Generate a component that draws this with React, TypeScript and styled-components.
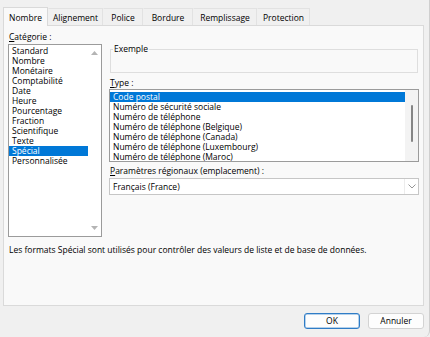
import React from 'react';
import styled, { createGlobalStyle } from 'styled-components';

const Global = createGlobalStyle`
  html, body { margin: 0; padding: 0; background: #f0f0f0; }
  body {
    font-family: "Open Sans", "Noto Sans", "Liberation Sans", sans-serif;
    font-size: 8.5px;
    color: #000;
    -webkit-font-smoothing: antialiased;
  }
  #root { width: 430px; height: 337px; }
`;

const Dialog = styled.div`
  width: 430px;
  height: 337px;
  box-sizing: border-box;
  background: #f0f0f0;
  padding: 8px 5px 0 3px;
  display: flex;
  flex-direction: column;
  border-right: 1px solid #cfcfcf;
  border-bottom-right-radius: 6px;
`;

const TabBar = styled.div`
  display: flex;
  align-items: flex-end;
  height: 17px;
  position: relative;
  z-index: 1;
`;

const Tab = styled.div<{ $w: number; $active?: boolean }>`
  width: ${(p) => p.$w}px;
  box-sizing: border-box;
  height: ${(p) => (p.$active ? 19 : 17)}px;
  margin-bottom: ${(p) => (p.$active ? -1 : 0)}px;
  display: flex;
  align-items: center;
  justify-content: center;
  padding-top: ${(p) => (p.$active ? 0 : 1)}px;
  background: ${(p) => (p.$active ? '#f9f9f9' : '#f0f0f0')};
  border: 1px solid ${(p) => (p.$active ? '#d9d9d9' : '#e2e2e2')};
  border-bottom: none;
  border-left-color: ${(p) => (p.$active ? '#d9d9d9' : 'transparent')};
  white-space: nowrap;
`;

const Panel = styled.div`
  flex: 0 0 281px;
  box-sizing: border-box;
  background: #f9f9f9;
  border: 1px solid #dadada;
  padding: 0 5px 0 4px;
  display: flex;
  flex-direction: column;
`;

const Columns = styled.div`
  display: grid;
  grid-template-columns: 94px 310px;
  column-gap: 7px;
  align-items: start;
`;

const Column = styled.div<{ $top: number }>`
  display: flex;
  flex-direction: column;
  padding-top: ${(p) => p.$top}px;
`;

const Label = styled.div<{ $mt?: number }>`
  line-height: 10px;
  height: 10px;
  margin-top: ${(p) => p.$mt ?? 0}px;
  padding-left: 1px;
  white-space: nowrap;
  u { text-decoration-thickness: 1px; text-underline-offset: 1px; }
`;

const ListBox = styled.div<{ $h: number; $mt: number }>`
  height: ${(p) => p.$h}px;
  margin-top: ${(p) => p.$mt}px;
  box-sizing: border-box;
  border: 1px solid #9b9b9b;
  background: #fff;
  display: flex;
  overflow: hidden;
`;

const Items = styled.div<{ $pt: number }>`
  flex: 1;
  padding-top: ${(p) => p.$pt}px;
  overflow: hidden;
`;

const Item = styled.div<{ $selected?: boolean }>`
  height: 10px;
  line-height: 10px;
  padding-left: 3px;
  white-space: nowrap;
  background: ${(p) => (p.$selected ? '#0078d7' : 'transparent')};
  color: ${(p) => (p.$selected ? '#fff' : '#000')};
`;

const ArrowTrack = styled.div`
  width: 13px;
  display: flex;
  flex-direction: column;
  align-items: center;
  justify-content: space-between;
  padding: 6px 0 6px;
`;

const ThumbTrack = styled.div`
  width: 13px;
  background: #f3f3f3;
  display: flex;
  flex-direction: column;
  align-items: center;
  padding-top: 15px;
`;

const Thumb = styled.div`
  width: 2px;
  height: 37px;
  background: #858585;
  border-radius: 1px;
`;

const GroupBox = styled.fieldset`
  margin: 18px 1px 0;
  padding: 0 2px;
  border: 1px solid #dedede;
  min-width: 0;
  legend {
    padding: 0 1px;
    line-height: 10px;
    font-size: 8.5px;
  }
`;

const GroupBody = styled.div`
  height: 18px;
`;

const Select = styled.div`
  height: 17px;
  margin-top: 2px;
  box-sizing: border-box;
  border: 1px solid #c6c6c6;
  background: #fff;
  display: flex;
  align-items: stretch;
`;

const SelectText = styled.div`
  flex: 1;
  padding-left: 3px;
  line-height: 15px;
`;

const SelectButton = styled.div`
  width: 13px;
  border-left: 1px solid #ececec;
  display: flex;
  align-items: center;
  justify-content: center;
`;

const Description = styled.div`
  margin-top: 8px;
  line-height: 10px;
  padding-left: 1px;
  white-space: nowrap;
`;

const Footer = styled.div`
  display: flex;
  justify-content: flex-end;
  gap: 8px;
  margin-top: 7px;
`;

const Button = styled.button<{ $default?: boolean }>`
  width: 56px;
  height: 16px;
  box-sizing: border-box;
  font: inherit;
  font-size: 8.5px;
  line-height: 12px;
  padding: 0;
  color: #000;
  background: #fdfdfd;
  border: 1px solid ${(p) => (p.$default ? '#2f7cc6' : '#d3d3d3')};
  border-radius: 3px;
  box-shadow: ${(p) => (p.$default ? 'inset 0 0 0 0.5px #6fa6da' : 'none')};
`;

const Up = () => (
  <svg width="7" height="4" viewBox="0 0 7 4">
    <path d="M0 4 L3.5 0 L7 4 Z" fill="#b4b4b4" />
  </svg>
);
const Down = () => (
  <svg width="7" height="4" viewBox="0 0 7 4">
    <path d="M0 0 L3.5 4 L7 0 Z" fill="#b4b4b4" />
  </svg>
);
const Chevron = () => (
  <svg width="8" height="5" viewBox="0 0 8 5">
    <path d="M0.5 0.5 L4 4 L7.5 0.5" fill="none" stroke="#8a8a8a" strokeWidth="0.9" />
  </svg>
);

const tabs: [string, number][] = [
  ['Nombre', 45],
  ['Alignement', 55],
  ['Police', 40],
  ['Bordure', 50],
  ['Remplissage', 64],
  ['Protection', 53],
];

const categories = [
  'Standard',
  'Nombre',
  'Monétaire',
  'Comptabilité',
  'Date',
  'Heure',
  'Pourcentage',
  'Fraction',
  'Scientifique',
  'Texte',
  'Spécial',
  'Personnalisée',
];

const types = [
  'Code postal',
  'Numéro de sécurité sociale',
  'Numéro de téléphone',
  'Numéro de téléphone (Belgique)',
  'Numéro de téléphone (Canada)',
  'Numéro de téléphone (Luxembourg)',
  'Numéro de téléphone (Maroc)',
];

export default function App() {
  return (
    <>
      <Global />
      <Dialog>
        <TabBar>
          {tabs.map(([t, w], i) => (
            <Tab key={t} $w={w} $active={i === 0}>
              {t}
            </Tab>
          ))}
        </TabBar>
        <Panel>
          <Columns>
            <Column $top={6}>
              <Label>
                <u>C</u>atégorie :
              </Label>
              <ListBox $h={193} $mt={2}>
                <Items $pt={1}>
                  {categories.map((c) => (
                    <Item key={c} $selected={c === 'Spécial'}>
                      {c}
                    </Item>
                  ))}
                </Items>
                <ArrowTrack>
                  <Up />
                  <Down />
                </ArrowTrack>
              </ListBox>
            </Column>
            <Column $top={0}>
              <GroupBox>
                <legend>Exemple</legend>
                <GroupBody />
              </GroupBox>
              <Label $mt={5}>
                <u>T</u>ype :
              </Label>
              <ListBox $h={73} $mt={1}>
                <Items $pt={2}>
                  {types.map((t, i) => (
                    <Item key={t} $selected={i === 0}>
                      {t}
                    </Item>
                  ))}
                </Items>
                <ThumbTrack>
                  <Thumb />
                </ThumbTrack>
              </ListBox>
              <Label $mt={4}>
                <u>P</u>aramètres régionaux (emplacement) :
              </Label>
              <Select>
                <SelectText>Français (France)</SelectText>
                <SelectButton>
                  <Chevron />
                </SelectButton>
              </Select>
            </Column>
          </Columns>
          <Description>
            Les formats Spécial sont utilisés pour contrôler des valeurs de liste et de base de données.
          </Description>
        </Panel>
        <Footer>
          <Button $default>OK</Button>
          <Button>Annuler</Button>
        </Footer>
      </Dialog>
    </>
  );
}
